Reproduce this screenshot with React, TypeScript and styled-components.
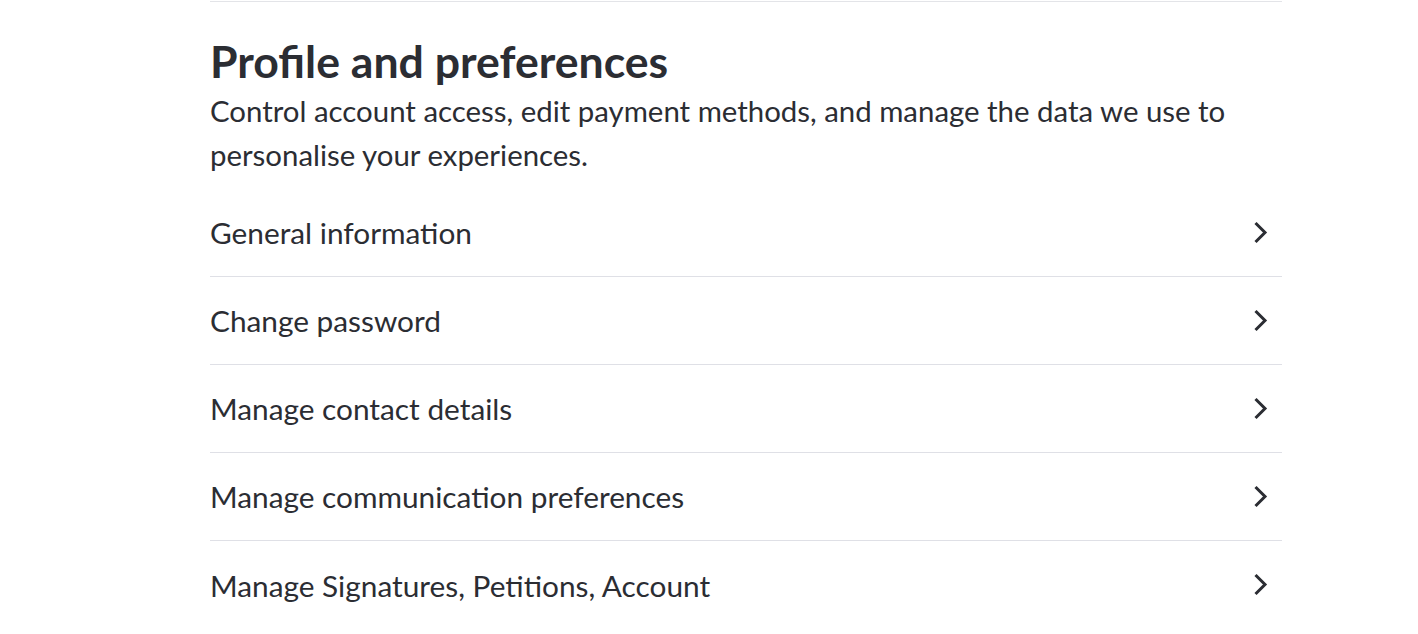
import React from 'react';
import styled, { createGlobalStyle } from 'styled-components';

const GlobalStyle = createGlobalStyle`
    body {
        margin: 0;
        background: #fff;
        font-family: Lato, "Open Sans", sans-serif;
        color: #2b2d33;
    }
`;

const Page = styled.div`
    padding: 1px 0 0 210px;
`;

const Section = styled.section`
    width: 1072px;
    border-top: 1px solid #e3e4e8;
`;

const Title = styled.h2`
    margin: 33px 0 0;
    font-size: 44.6px;
    line-height: 52px;
    font-weight: 700;
    color: #2b2d33;
`;

const Intro = styled.p`
    margin: 2px 0 12px;
    font-size: 29.4px;
    line-height: 44px;
`;

const List = styled.ul`
    list-style: none;
    margin: 0;
    padding: 0;
`;

const Row = styled.li`
    display: flex;
    align-items: center;
    justify-content: space-between;
    box-sizing: border-box;
    height: 88px;
    border-bottom: 1px solid #dfe0e6;
    font-size: 29.8px;
    cursor: pointer;

    &:last-child {
        border-bottom: none;
    }
`;

const Chevron = styled.svg`
    flex-shrink: 0;
    margin-right: 12px;
`;

const items = [
    'General information',
    'Change password',
    'Manage contact details',
    'Manage communication preferences',
    'Manage Signatures, Petitions, Account',
];

const App: React.FC = () => (
    <Page>
        <GlobalStyle />
        <Section>
            <Title>Profile and preferences</Title>
            <Intro>
                Control account access, edit payment methods, and manage the data we use to
                personalise your experiences.
            </Intro>
            <List>
                {items.map(label => (
                    <Row key={label}>
                        <span>{label}</span>
                        <Chevron width="20" height="28" viewBox="0 0 20 28" fill="none">
                            <path d="M5.5 4 L15 13.5 L5.5 23" stroke="#2b2d33" strokeWidth="3" />
                        </Chevron>
                    </Row>
                ))}
            </List>
        </Section>
    </Page>
);

export default App;
